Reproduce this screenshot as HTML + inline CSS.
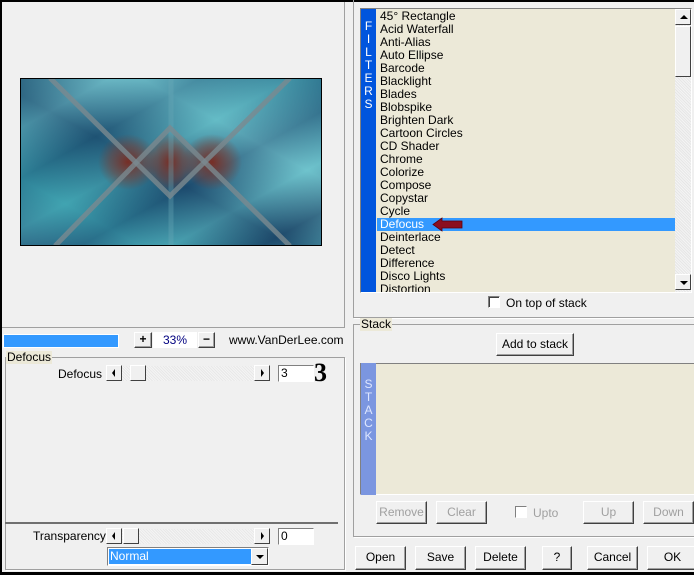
<!DOCTYPE html>
<html><head><meta charset="utf-8"><style>
*{box-sizing:border-box;margin:0;padding:0}
body{width:694px;height:575px;background:#000;position:relative;overflow:hidden;font-family:"Liberation Sans",sans-serif;font-size:11px;color:#000}
.a{position:absolute}
#main{position:absolute;left:2px;top:2px;width:692px;height:570px;background:#f0f0f0}
.btn{position:absolute;background:#f0f0f0;border:1px solid;border-color:#fff #404040 #404040 #fff;box-shadow:inset -1px -1px 0 #a0a0a0;text-align:center;font-size:12px;line-height:20px}
.dis{color:#a0a0a0}
.grp{position:absolute;border:1px solid #a0a0a0;box-shadow:1px 1px 0 #fff}
.lbl{position:absolute;background:#ece9d8;font-size:12px;padding:0 1px;line-height:12px}
.sunk{position:absolute;border:1px solid;border-color:#808080 #fff #fff #808080;background:#fff}
.item{height:13px;line-height:13px;font-size:12px;padding-left:3px;white-space:nowrap}
.arr{position:absolute;background:#f0f0f0;border:1px solid;border-color:#fff #404040 #404040 #fff;width:16px;height:16px}
.track{position:absolute;background:repeating-linear-gradient(45deg,#f4f4f4 0 1px,#e8e8e8 1px 2px)}
.cb{position:absolute;width:12px;height:12px;border:1px solid;border-color:#808080 #fff #fff #808080;background:#fff;box-shadow:inset 1px 1px 0 #404040}
</style></head><body>
<div id="main"></div>
<div class="a" style="left:2px;top:2px;width:343px;height:326px;border-right:1px solid #a0a0a0;border-bottom:1px solid #a0a0a0"></div>
<svg class="a" style="left:20px;top:78px" width="302" height="168" viewBox="0 0 302 168">
<defs>
<linearGradient id="g1" x1="0" y1="0" x2="1" y2="1">
<stop offset="0" stop-color="#2f6f88"/><stop offset=".15" stop-color="#6bbcc8"/><stop offset=".3" stop-color="#22607e"/><stop offset=".45" stop-color="#4aa8b5"/><stop offset=".6" stop-color="#1e4f72"/><stop offset=".75" stop-color="#5fb7c2"/><stop offset=".9" stop-color="#1f4a6a"/><stop offset="1" stop-color="#4a98a8"/></linearGradient>
<linearGradient id="g2" x1="1" y1="0" x2="0" y2="1">
<stop offset="0" stop-color="#2a6e8a" stop-opacity=".6"/><stop offset=".3" stop-color="#7fd0d8" stop-opacity=".5"/><stop offset=".55" stop-color="#1a4468" stop-opacity=".5"/><stop offset=".8" stop-color="#38a0ae" stop-opacity=".5"/><stop offset="1" stop-color="#2c5f80" stop-opacity=".6"/></linearGradient>
<radialGradient id="r" cx=".5" cy=".5" r=".5"><stop offset="0" stop-color="#7a2a20" stop-opacity=".95"/><stop offset=".6" stop-color="#7a3a30" stop-opacity=".5"/><stop offset="1" stop-color="#7a3a30" stop-opacity="0"/></radialGradient>
</defs>
<rect width="302" height="168" fill="url(#g1)"/>
<rect width="302" height="168" fill="url(#g2)"/>
<ellipse cx="108" cy="84" rx="30" ry="28" fill="url(#r)"/>
<ellipse cx="150" cy="84" rx="26" ry="30" fill="url(#r)"/>
<ellipse cx="192" cy="84" rx="30" ry="28" fill="url(#r)"/>
<line x1="151" y1="0" x2="151" y2="168" stroke="#6aa8b8" stroke-width="5" stroke-opacity=".35"/>
<g stroke="#7a8a90" stroke-width="5" stroke-opacity=".8" fill="none">
<polyline points="30,0 150,118 270,0"/>
<polyline points="35,168 150,50 270,168"/>
</g>
<rect x=".5" y=".5" width="301" height="167" fill="none" stroke="#000"/>
</svg>
<div class="a" style="left:3px;top:334px;width:116px;height:14px;background:#3399ff;border:1px solid #fff"></div>
<div class="btn" style="left:134px;top:332px;width:18px;height:16px;line-height:13px;font-weight:bold">+</div>
<div class="a" style="left:153px;top:332px;width:44px;height:16px;background:#fff;color:#000080;font-size:12px;text-align:center;line-height:16px">33%</div>
<div class="btn" style="left:198px;top:332px;width:17px;height:16px;line-height:13px;font-weight:bold">−</div>
<div class="a" style="left:229px;top:333px;font-size:12px">www.VanDerLee.com</div>
<div class="grp" style="left:5px;top:357px;width:340px;height:213px"></div>
<div class="lbl" style="left:6px;top:351px;height:13px">Defocus</div>
<div class="a" style="left:58px;top:367px;font-size:12px">Defocus</div>
<div class="arr" style="left:106px;top:365px"><span class="a" style="left:5px;top:3px;border:4px solid transparent;border-right:3px solid #000;border-left:0"></span></div>
<div class="track" style="left:122px;top:366px;width:132px;height:15px"></div>
<div class="arr" style="left:130px;top:365px"></div>
<div class="arr" style="left:254px;top:365px"><span class="a" style="left:6px;top:3px;border:4px solid transparent;border-left:3px solid #000;border-right:0"></span></div>
<div class="sunk" style="left:278px;top:365px;width:36px;height:17px;font-size:12px;padding-left:2px;line-height:14px">3</div>
<div class="a" style="left:314px;top:359px;font-family:'Liberation Serif',serif;font-weight:bold;font-size:26px;line-height:28px">3</div>
<div class="a" style="left:5px;top:522px;width:333px;height:2px;background:#707070"></div>
<div class="a" style="left:33px;top:529px;font-size:12px">Transparency</div>
<div class="arr" style="left:106px;top:528px"><span class="a" style="left:5px;top:3px;border:4px solid transparent;border-right:3px solid #000;border-left:0"></span></div>
<div class="track" style="left:122px;top:529px;width:132px;height:15px"></div>
<div class="arr" style="left:123px;top:528px"></div>
<div class="arr" style="left:254px;top:528px"><span class="a" style="left:6px;top:3px;border:4px solid transparent;border-left:3px solid #000;border-right:0"></span></div>
<div class="sunk" style="left:278px;top:528px;width:36px;height:17px;font-size:12px;padding-left:2px;line-height:14px">0</div>
<div class="sunk" style="left:107px;top:547px;width:162px;height:19px;background:#fff"></div>
<div class="a" style="left:109px;top:549px;width:142px;height:15px;background:#3399ff;color:#fff;font-size:12px;line-height:15px;padding-left:1px">Normal</div>
<div class="arr" style="left:251px;top:548px;width:17px;height:17px"><span class="a" style="left:4px;top:6px;border:4px solid transparent;border-top:4px solid #000;border-bottom:0"></span></div>
<div class="grp" style="left:353px;top:-4px;width:345px;height:322px"></div>
<div class="sunk" style="left:360px;top:8px;width:332px;height:285px;background:#ece9d8"></div>
<div class="a" style="left:361px;top:9px;width:15px;height:283px;background:#0055dd;color:#fff;font-size:12px;text-align:center;line-height:13px;padding-top:11px">F<br>I<br>L<br>T<br>E<br>R<br>S</div>
<div class="a" style="left:377px;top:10px;width:298px;height:282px;overflow:hidden">
<div class="item">45° Rectangle</div><div class="item">Acid Waterfall</div><div class="item">Anti-Alias</div><div class="item">Auto Ellipse</div><div class="item">Barcode</div><div class="item">Blacklight</div><div class="item">Blades</div><div class="item">Blobspike</div><div class="item">Brighten Dark</div><div class="item">Cartoon Circles</div><div class="item">CD Shader</div><div class="item">Chrome</div><div class="item">Colorize</div><div class="item">Compose</div><div class="item">Copystar</div><div class="item">Cycle</div><div class="item" style="background:#3399ff;color:#fff">Defocus</div><div class="item">Deinterlace</div><div class="item">Detect</div><div class="item">Difference</div><div class="item">Disco Lights</div><div class="item">Distortion</div>
</div>
<svg class="a" style="left:432px;top:217px" width="31" height="15"><path d="M1 7.5 L10 1 L10 4 L30 4 L30 11 L10 11 L10 14 Z" fill="#8a0f1f" stroke="#5a0010" stroke-width=".8"/></svg>
<div class="a" style="left:675px;top:9px;width:16px;height:283px;background:repeating-linear-gradient(45deg,#f4f4f4 0 1px,#e6e6e6 1px 2px)"></div>
<div class="arr" style="left:675px;top:9px"><span class="a" style="left:4px;top:5px;border:4px solid transparent;border-bottom:4px solid #000;border-top:0"></span></div>
<div class="arr" style="left:675px;top:26px;height:51px"></div>
<div class="arr" style="left:675px;top:274px"><span class="a" style="left:4px;top:6px;border:4px solid transparent;border-top:4px solid #000;border-bottom:0"></span></div>
<div class="cb" style="left:488px;top:296px"></div>
<div class="a" style="left:506px;top:296px;font-size:12px">On top of stack</div>
<div class="grp" style="left:353px;top:324px;width:345px;height:213px"></div>
<div class="lbl" style="left:360px;top:318px;height:13px">Stack</div>
<div class="btn" style="left:496px;top:333px;width:78px;height:23px">Add to stack</div>
<div class="sunk" style="left:360px;top:363px;width:336px;height:132px;background:#ece9d8"></div>
<div class="a" style="left:361px;top:363px;width:15px;height:132px;background:#7b96e0;color:#dde6ff;font-size:12px;text-align:center;line-height:13px;padding-top:15px">S<br>T<br>A<br>C<br>K</div>
<div class="btn dis" style="left:376px;top:501px;width:51px;height:23px">Remove</div>
<div class="btn dis" style="left:436px;top:501px;width:51px;height:23px">Clear</div>
<div class="cb" style="left:515px;top:506px;box-shadow:none"></div>
<div class="a dis" style="left:533px;top:506px;font-size:12px">Upto</div>
<div class="btn dis" style="left:583px;top:501px;width:51px;height:23px">Up</div>
<div class="btn dis" style="left:643px;top:501px;width:51px;height:23px">Down</div>
<div class="btn" style="left:355px;top:546px;width:51px;height:24px">Open</div>
<div class="btn" style="left:415px;top:546px;width:51px;height:24px">Save</div>
<div class="btn" style="left:475px;top:546px;width:51px;height:24px">Delete</div>
<div class="btn" style="left:542px;top:546px;width:30px;height:24px">?</div>
<div class="btn" style="left:587px;top:546px;width:51px;height:24px">Cancel</div>
<div class="btn" style="left:647px;top:546px;width:51px;height:24px">OK</div>
</body></html>
